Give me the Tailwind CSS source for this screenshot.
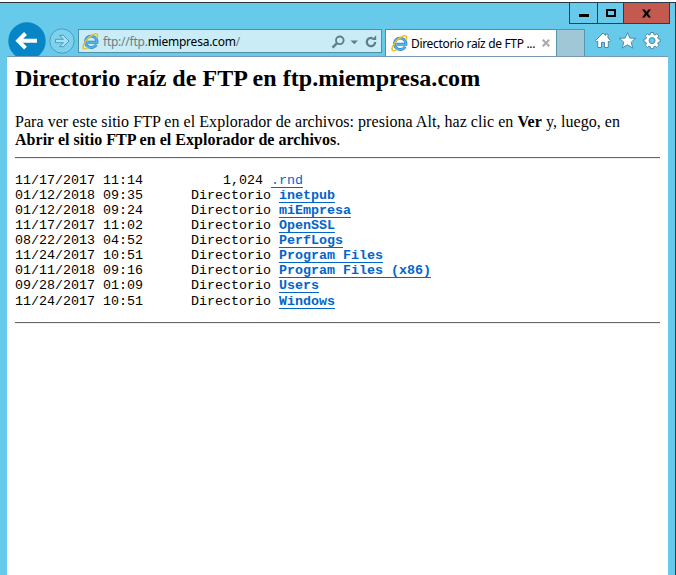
<!DOCTYPE html>
<html lang="es">
<head>
<meta charset="utf-8">
<title>Directorio raíz de FTP en ftp.miempresa.com</title>
<script src="https://cdn.jsdelivr.net/npm/@tailwindcss/browser@4"></script>
</head>
<body class="bg-white">
<svg class="hidden">
  <symbol id="ie" viewBox="0 0 17 17">
    <path d="M14.200 11.600A5.700 5.700 0 1 1 14.900 9.300H5.500" fill="none" stroke="#2f86c8" stroke-width="2.900"/>
    <path d="M14.200 11.600A5.700 5.700 0 1 1 14.900 9.300H5.500" fill="none" stroke="#55b4ea" stroke-width="1.500"/>
    <path d="M2.600 15.600C.2 16 .6 12.4 3.4 8.4 6.8 3.6 12.6-.4 15 1.200c1 .8.6 2.400-.2 4" fill="none" stroke="#f0bf1f" stroke-width="1.600"/>
    <path d="M2.600 15.600c1.200.1 2.400-.4 3.400-1.100" fill="none" stroke="#f0bf1f" stroke-width="1.300"/>
  </symbol>
</svg>
<div class="flex h-[575px] w-[676px] flex-col overflow-hidden pt-[2px]">
  <div class="flex min-h-0 flex-1 flex-col border-t border-r border-[#2b333b] bg-[#67caea]">
    <!-- Window controls -->
    <div class="flex h-[21px] shrink-0 justify-end pr-[5px]">
      <div class="-mt-px flex h-[22px] border border-[#263f4d]">
        <div class="flex w-[28px] items-center justify-center border-r border-[#263f4d]"><div class="mt-[4px] h-[3px] w-[10px] bg-black"></div></div>
        <div class="flex w-[26px] items-center justify-center border-r border-[#263f4d]"><div class="h-[8px] w-[10px] border-2 border-black"></div></div>
        <div class="flex w-[45px] items-center justify-center bg-[#c3594f]">
          <svg class="size-[9px]" viewBox="0 0 9 9"><path d="M0 .5h2.700l1.800 2.500L6.300.5H9L6 4.500 9 8.500H6.300L4.500 6 2.700 8.500H0l3-4z" fill="#000"/></svg>
        </div>
      </div>
    </div>
    <!-- Navigation, address and tabs -->
    <div class="-mt-[2px] flex h-[34px] shrink-0 overflow-hidden pl-[8px] font-['Noto_Sans','Open_Sans',sans-serif] text-[12px]">
      <svg class="h-[38px] w-[70px] shrink-0" viewBox="0 0 70 38">
        <circle cx="19" cy="19" r="18.700" fill="#0686c6"/>
        <path d="M17.500 11.500 10.200 18.800l7.300 7.300M10.500 18.800H29" fill="none" stroke="#fff" stroke-width="4"/>
        <circle cx="54" cy="19" r="12.200" fill="#7dd2ed" stroke="#4b9db9" stroke-width="1"/>
        <path d="M47.500 17.300h8l-4-4h3.800l5.700 5.700-5.700 5.700h-3.800l4-4h-8z" fill="#a9e3f5" stroke="#4b9db9" stroke-width="1"/>
      </svg>
      <div class="mt-[7px] flex h-[24px] w-[304px] shrink-0 items-center border border-[#4d91a6] bg-[#c9ecf7] pl-[3px]">
        <svg class="size-[17px]"><use href="#ie"/></svg>
        <span class="ml-[4px] w-[210px] whitespace-pre pt-[2px] leading-[20px] tracking-[-0.24px] text-[#707e83]">ftp://ftp.<span class="text-black">miempresa.com</span>/</span>
        <svg class="ml-[17px] mt-px h-[16px] w-[48px]" viewBox="0 0 48 16" fill="none" stroke="#5f7e89">
          <circle cx="9.800" cy="6.300" r="3.800" stroke-width="1.900"/><path d="M7 9.100 2.500 13.600" stroke-width="2.400"/>
          <path d="M20.500 6.500h7.500l-3.700 3.800z" fill="#5f7e89" stroke="none"/>
          <path d="M45.200 8a4.200 4.200 0 1 1-2.500-3.800" stroke-width="2.200"/><path d="M41.500 6.100h4.700V1.200z" fill="#5f7e89" stroke="none"/>
        </svg>
      </div>
      <div class="ml-[3px] mt-[7px] flex h-[27px] w-[171px] shrink-0 items-center border-t border-l border-[#4d91a6] bg-white pl-[5px]">
        <svg class="size-[17px] shrink-0"><use href="#ie"/></svg>
        <span class="ml-[3px] w-[127px] whitespace-pre pt-[2px] leading-[20px] tracking-[-0.33px] text-black">Directorio raíz de FTP ...</span>
        <svg class="ml-[4px] size-[8px]" viewBox="0 0 8 8"><path d="m.7.7 6.600 6.600m0-6.600L.7 7.300" stroke="#aaa" stroke-width="2.100"/></svg>
      </div>
      <div class="mt-[7px] h-[27px] w-[29px] shrink-0 border border-b-0 border-[#5795aa] bg-[#a0c7d6]"></div>
      <svg class="ml-[10px] mt-[10px] h-[18px] w-[66px] shrink-0" viewBox="0 0 66 18" fill="#fff" stroke="#4b8ba0" stroke-width="1">
        <path d="M.5 8.500 8 1l2.500 2.500V2H13v4l2.500 2.500L14.200 10l-.9-.8v6.300H9.500v-5h-3v5H2.700V9.200l-.9.800z"/>
        <path d="m32.500.6 2.400 5.500 5.900.2-4.600 3.900 1.600 5.900-5.300-3.300-5.300 3.300 1.600-5.900-4.600-3.900 5.900-.2z"/>
        <path d="M55.700.8h2.800l.4 2 1.300.5 1.700-1.200 2 2-1.200 1.700.5 1.300 2 .4v2.800l-2 .4-.5 1.300 1.200 1.700-2 2-1.700-1.200-1.300.5-.4 2h-2.800l-.4-2-1.300-.5-1.700 1.200-2-2 1.200-1.700-.5-1.300-2-.4V7.500l2-.4.5-1.300-1.200-1.700 2-2L54 3.300l1.300-.5z" transform="translate(0 -.3)"/>
        <circle cx="57.100" cy="8.600" r="3" fill="#67caea"/>
      </svg>
    </div>
    <!-- Page -->
    <main class="ml-[7px] mr-[7px] flex-1 border-t border-[#7898b5] bg-white px-[8px] pt-[7px] font-['Liberation_Serif',serif] text-black">
      <h1 class="whitespace-nowrap text-[24px] font-bold leading-[28px] tracking-[0.035px]">Directorio raíz de FTP en ftp.miempresa.com</h1>
      <p class="mt-[21px] whitespace-nowrap text-[16px] leading-[18px] tracking-[0.045px]">Para ver este sitio FTP en el Explorador de archivos: presiona Alt, haz clic en <b>Ver</b> y, luego, en<br><b class="tracking-[0.025px]">Abrir el sitio FTP en el Explorador de archivos</b>.</p>
      <hr class="mt-[8px] h-[2px] w-[645px] border-t border-b border-t-[#696969] border-b-[#ededed]">
      <pre class="mt-[14px] h-[136px] font-['Liberation_Mono',monospace] text-[13.333px] leading-[15.07px] underline-offset-[3px]">11/17/2017 11:14          1,024 <a class="text-[#0066cc] underline decoration-1" href="#">.rnd</a>
01/12/2018 09:35      Directorio <a class="font-bold text-[#0066cc] underline decoration-1" href="#">inetpub</a>
01/12/2018 09:24      Directorio <a class="font-bold text-[#0066cc] underline decoration-1" href="#">miEmpresa</a>
11/17/2017 11:02      Directorio <a class="font-bold text-[#0066cc] underline decoration-1" href="#">OpenSSL</a>
08/22/2013 04:52      Directorio <a class="font-bold text-[#0066cc] underline decoration-1" href="#">PerfLogs</a>
11/24/2017 10:51      Directorio <a class="font-bold text-[#0066cc] underline decoration-1" href="#">Program Files</a>
01/11/2018 09:16      Directorio <a class="font-bold text-[#0066cc] underline decoration-1" href="#">Program Files (x86)</a>
09/28/2017 01:09      Directorio <a class="font-bold text-[#0066cc] underline decoration-1" href="#">Users</a>
11/24/2017 10:51      Directorio <a class="font-bold text-[#0066cc] underline decoration-1" href="#">Windows</a></pre>
      <hr class="mt-[13px] h-[2px] w-[645px] border-t border-b border-t-[#696969] border-b-[#ededed]">
    </main>
  </div>
</div>
</body>
</html>
